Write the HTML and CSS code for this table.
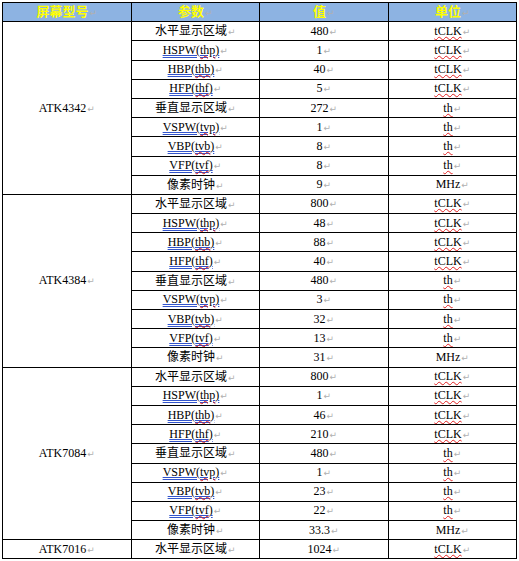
FILE: index.html
```html
<!DOCTYPE html>
<html>
<head>
<meta charset="utf-8">
<link rel="stylesheet" href="styles.css">
</head>
<body>
<table class="spec">
<colgroup><col class="c"><col class="c"><col class="c"><col class="c"></colgroup>
<thead>
<tr><th>屏幕型号<span class="pm">↵</span></th><th>参数<span class="pm">↵</span></th><th>值<span class="pm">↵</span></th><th>单位<span class="pm">↵</span></th></tr>
</thead>
<tbody>
<tr><td rowspan="9" class="model">ATK4342<span class="pm">↵</span></td><td class="cn">水平显示区域<span class="pm">↵</span></td><td>480<span class="pm">↵</span></td><td><span class="sp">tCLK</span><span class="pm">↵</span></td></tr>
<tr><td><span class="gr">HSPW(<span class="sp">thp</span>)</span><span class="pm">↵</span></td><td>1<span class="pm">↵</span></td><td><span class="sp">tCLK</span><span class="pm">↵</span></td></tr>
<tr><td><span class="gr">HBP(<span class="sp">thb</span>)</span><span class="pm">↵</span></td><td>40<span class="pm">↵</span></td><td><span class="sp">tCLK</span><span class="pm">↵</span></td></tr>
<tr><td><span class="gr">HFP(<span class="sp">thf</span>)</span><span class="pm">↵</span></td><td>5<span class="pm">↵</span></td><td><span class="sp">tCLK</span><span class="pm">↵</span></td></tr>
<tr><td class="cn">垂直显示区域<span class="pm">↵</span></td><td>272<span class="pm">↵</span></td><td><span class="sp">th</span><span class="pm">↵</span></td></tr>
<tr><td><span class="gr">VSPW(<span class="sp">tvp</span>)</span><span class="pm">↵</span></td><td>1<span class="pm">↵</span></td><td><span class="sp">th</span><span class="pm">↵</span></td></tr>
<tr><td><span class="gr">VBP(<span class="sp">tvb</span>)</span><span class="pm">↵</span></td><td>8<span class="pm">↵</span></td><td><span class="sp">th</span><span class="pm">↵</span></td></tr>
<tr><td><span class="gr">VFP(<span class="sp">tvf</span>)</span><span class="pm">↵</span></td><td>8<span class="pm">↵</span></td><td><span class="sp">th</span><span class="pm">↵</span></td></tr>
<tr><td class="cn">像素时钟<span class="pm">↵</span></td><td>9<span class="pm">↵</span></td><td>MHz<span class="pm">↵</span></td></tr>

<tr><td rowspan="9" class="model">ATK4384<span class="pm">↵</span></td><td class="cn">水平显示区域<span class="pm">↵</span></td><td>800<span class="pm">↵</span></td><td><span class="sp">tCLK</span><span class="pm">↵</span></td></tr>
<tr><td><span class="gr">HSPW(<span class="sp">thp</span>)</span><span class="pm">↵</span></td><td>48<span class="pm">↵</span></td><td><span class="sp">tCLK</span><span class="pm">↵</span></td></tr>
<tr><td><span class="gr">HBP(<span class="sp">thb</span>)</span><span class="pm">↵</span></td><td>88<span class="pm">↵</span></td><td><span class="sp">tCLK</span><span class="pm">↵</span></td></tr>
<tr><td><span class="gr">HFP(<span class="sp">thf</span>)</span><span class="pm">↵</span></td><td>40<span class="pm">↵</span></td><td><span class="sp">tCLK</span><span class="pm">↵</span></td></tr>
<tr><td class="cn">垂直显示区域<span class="pm">↵</span></td><td>480<span class="pm">↵</span></td><td><span class="sp">th</span><span class="pm">↵</span></td></tr>
<tr><td><span class="gr">VSPW(<span class="sp">tvp</span>)</span><span class="pm">↵</span></td><td>3<span class="pm">↵</span></td><td><span class="sp">th</span><span class="pm">↵</span></td></tr>
<tr><td><span class="gr">VBP(<span class="sp">tvb</span>)</span><span class="pm">↵</span></td><td>32<span class="pm">↵</span></td><td><span class="sp">th</span><span class="pm">↵</span></td></tr>
<tr><td><span class="gr">VFP(<span class="sp">tvf</span>)</span><span class="pm">↵</span></td><td>13<span class="pm">↵</span></td><td><span class="sp">th</span><span class="pm">↵</span></td></tr>
<tr><td class="cn">像素时钟<span class="pm">↵</span></td><td>31<span class="pm">↵</span></td><td>MHz<span class="pm">↵</span></td></tr>

<tr><td rowspan="9" class="model">ATK7084<span class="pm">↵</span></td><td class="cn">水平显示区域<span class="pm">↵</span></td><td>800<span class="pm">↵</span></td><td><span class="sp">tCLK</span><span class="pm">↵</span></td></tr>
<tr><td><span class="gr">HSPW(<span class="sp">thp</span>)</span><span class="pm">↵</span></td><td>1<span class="pm">↵</span></td><td><span class="sp">tCLK</span><span class="pm">↵</span></td></tr>
<tr><td><span class="gr">HBP(<span class="sp">thb</span>)</span><span class="pm">↵</span></td><td>46<span class="pm">↵</span></td><td><span class="sp">tCLK</span><span class="pm">↵</span></td></tr>
<tr><td><span class="gr">HFP(<span class="sp">thf</span>)</span><span class="pm">↵</span></td><td>210<span class="pm">↵</span></td><td><span class="sp">tCLK</span><span class="pm">↵</span></td></tr>
<tr><td class="cn">垂直显示区域<span class="pm">↵</span></td><td>480<span class="pm">↵</span></td><td><span class="sp">th</span><span class="pm">↵</span></td></tr>
<tr><td><span class="gr">VSPW(<span class="sp">tvp</span>)</span><span class="pm">↵</span></td><td>1<span class="pm">↵</span></td><td><span class="sp">th</span><span class="pm">↵</span></td></tr>
<tr><td><span class="gr">VBP(<span class="sp">tvb</span>)</span><span class="pm">↵</span></td><td>23<span class="pm">↵</span></td><td><span class="sp">th</span><span class="pm">↵</span></td></tr>
<tr><td><span class="gr">VFP(<span class="sp">tvf</span>)</span><span class="pm">↵</span></td><td>22<span class="pm">↵</span></td><td><span class="sp">th</span><span class="pm">↵</span></td></tr>
<tr><td class="cn">像素时钟<span class="pm">↵</span></td><td>33.3<span class="pm">↵</span></td><td>MHz<span class="pm">↵</span></td></tr>

<tr><td class="model">ATK7016<span class="pm">↵</span></td><td class="cn">水平显示区域<span class="pm">↵</span></td><td>1024<span class="pm">↵</span></td><td><span class="sp">tCLK</span><span class="pm">↵</span></td></tr>
</tbody>
</table>
</body>
</html>
```
FILE: styles.css
```css
html, body {
  margin: 0;
  padding: 0;
  background: #ffffff;
}
body {
  padding: 2px 0 0 2px;
}
.spec {
  border-collapse: collapse;
  table-layout: fixed;
  width: 515px;
  font-family: "Liberation Serif", serif;
  font-size: 12px;
  color: #000;
}
.spec col.c {
  width: 25%;
}
.spec tr {
  height: 19.2px;
}
.spec th, .spec td {
  border: 1px solid #000;
  padding: 0;
  text-align: center;
  vertical-align: middle;
  line-height: 14px;
  white-space: nowrap;
  overflow: hidden;
}
.spec th {
  background: #8db3e2;
  color: #ffff00;
  font-family: "Noto Sans CJK SC", sans-serif;
  font-weight: bold;
  font-size: 13px;
}
.spec td.cn {
  font-family: "Noto Sans CJK SC", sans-serif;
  font-size: 12px;
}
.pm {
  color: #b0b0b0;
  font-size: 9px;
  font-family: "DejaVu Sans", sans-serif;
  font-weight: normal;
  margin-left: 1px;
}
.gr {
  text-decoration: underline double #3355cc;
  text-decoration-thickness: 1px;
  text-underline-offset: 1px;
}
.sp {
  text-decoration: underline wavy #e02020;
  text-decoration-thickness: 1px;
  text-underline-offset: 1px;
}
```
